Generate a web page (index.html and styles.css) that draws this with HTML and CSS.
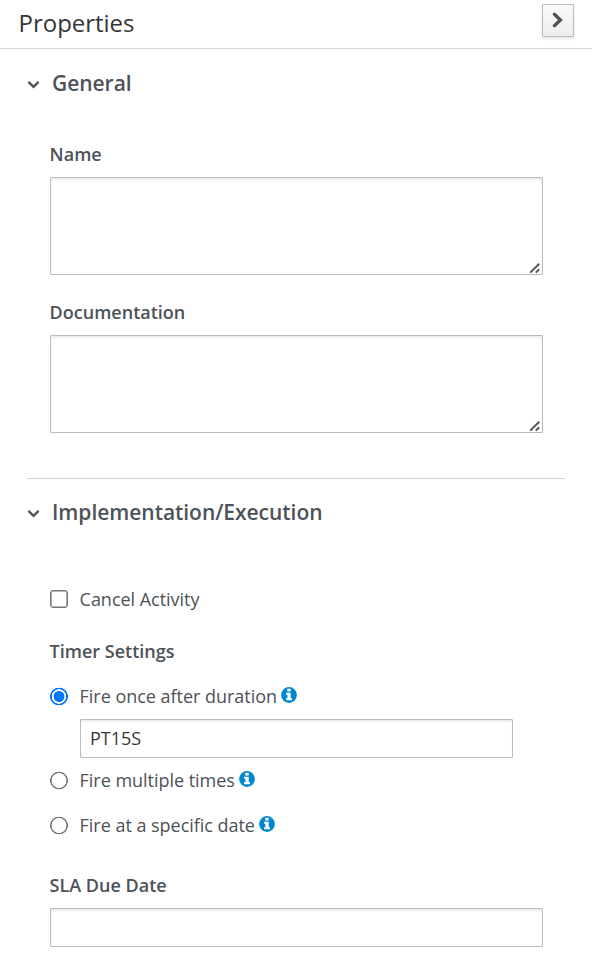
FILE: index.html
```html
<!DOCTYPE html>
<html lang="en">
<head>
<meta charset="utf-8">
<title>Properties</title>
<link rel="stylesheet" href="styles.css">
</head>
<body>
<svg class="defs" aria-hidden="true">
  <symbol id="chev" viewBox="0 0 13 9"><path d="M1.4 1.9 6.5 6.8 11.6 1.9" fill="none" stroke="#4d5258" stroke-width="2.3"/></symbol>
  <symbol id="info" viewBox="0 0 16 16"><circle cx="8" cy="8" r="7.9" fill="#0088ce"/><path d="M6.3 1.8h3.4v2.8H6.3zM5.1 5.8h4.6v5.5h1.3v2H5v-2h1.4V7.8H5.1z" fill="#fff"/></symbol>
  <symbol id="grip" viewBox="0 0 12 12"><path d="M1.2 10.6 10.2 1.8M6.8 10.6l3.4-3.4" fill="none" stroke="#555" stroke-width="2"/></symbol>
</svg>
<header class="header">
  <h1 class="title">Properties</h1>
  <button class="collapse" aria-label="Collapse"><svg width="12" height="16" viewBox="0 0 12 16"><path d="M2.4 2.3 8.4 8 2.4 13.7" fill="none" stroke="#4d5258" stroke-width="3.3" stroke-linecap="round"/></svg></button>
</header>
<main class="panel">
  <section class="section general">
    <h2 class="heading"><svg class="chev"><use href="#chev"/></svg>General</h2>
    <div class="fields">
      <label class="label" for="name">Name</label>
      <div class="area-wrap"><textarea class="area" id="name"></textarea><svg class="grip"><use href="#grip"/></svg></div>
      <label class="label doc" for="doc">Documentation</label>
      <div class="area-wrap"><textarea class="area" id="doc"></textarea><svg class="grip"><use href="#grip"/></svg></div>
    </div>
  </section>
  <section class="section execution">
    <h2 class="heading"><svg class="chev"><use href="#chev"/></svg>Implementation/Execution</h2>
    <div class="fields">
      <label class="choice cancel"><input type="checkbox">Cancel Activity</label>
      <div class="label timer">Timer Settings</div>
      <label class="choice once"><input type="radio" name="t" checked>Fire once after duration<svg class="info"><use href="#info"/></svg></label>
      <input class="text duration" type="text" value="PT15S">
      <label class="choice multiple"><input type="radio" name="t">Fire multiple times<svg class="info"><use href="#info"/></svg></label>
      <label class="choice date"><input type="radio" name="t">Fire at a specific date<svg class="info"><use href="#info"/></svg></label>
      <label class="label sla" for="sla">SLA Due Date</label>
      <input class="text" id="sla" type="text">
    </div>
  </section>
</main>
</body>
</html>
```
FILE: styles.css
```css
* { box-sizing: border-box; }
html { overflow: hidden; }
body { margin: 0; background: #fff; color: #4d5258; font: 18px/30px "Open Sans", sans-serif; }
.defs { position: absolute; width: 0; height: 0; }
.header { display: flex; justify-content: space-between; height: 49px; padding: 4px 18px 0 18.6px; border-bottom: 1px solid #d9d9d9; }
.title { margin: 0; font-size: 24px; line-height: 38px; font-weight: 400; letter-spacing: -0.05px; color: #363636; }
.collapse { display: flex; align-items: center; justify-content: center; width: 32px; height: 33px; padding: 0 0 2px; border: 1px solid #bbb; border-radius: 1px; background: linear-gradient(#fafafa, #ededed); box-shadow: 0 2px 3px rgba(3,3,3,.1); }
.panel { padding: 0 27px; }
.heading { display: flex; align-items: center; gap: 12px; height: 30px; margin: 0; font-size: 21px; font-weight: 600; letter-spacing: -0.04px; }
.chev { width: 13px; height: 9px; margin-top: 3px; }
.fields { padding: 0 22px 0 23px; }
.general { height: 429px; padding-top: 19px; }
.general .fields { padding-top: 41px; }
.execution { border-top: 1px solid #d1d1d1; padding-top: 18px; }
.execution .fields { padding-top: 57px; }
.label { display: block; height: 30px; margin: 0 0 8px -0.4px; font-weight: 600; }
.doc { margin-top: 22px; }
.area-wrap { position: relative; }
.grip { position: absolute; right: 2px; bottom: 1px; width: 12px; height: 12px; pointer-events: none; }
.area, .text { display: block; width: 100%; border: 1px solid #bbb; border-radius: 1px; background: #fff; box-shadow: inset 0 2px 2px rgba(3,3,3,.07); outline: 0; font: 18px/28px "Open Sans", sans-serif; color: #363636; }
.area { height: 98px; resize: none; }
.text { height: 39px; padding: 1px 9px 3px; }
.choice { display: flex; align-items: center; height: 30px; letter-spacing: -0.03px; }
.choice input { appearance: none; flex: none; width: 18px; height: 18px; margin: 0 11.6px 0 0; border: 1px solid #767676; box-shadow: inset 0 0 0 0.6px #767676; border-radius: 3px; background: #fff; }
.choice input[type="radio"] { height: 19px; margin-top: 1px; border: 0; box-shadow: none; border-radius: 0; background: radial-gradient(circle, #fff 7.2px, #767676 7.7px, #767676 8.6px, transparent 9.1px); }
.choice input[type="radio"]:checked { background: radial-gradient(circle, #0075ff 5.1px, #fff 5.7px, #fff 7px, #0075ff 7.5px, #0075ff 8.6px, transparent 9.1px); }
.timer { margin-top: 22px; margin-bottom: 15px; }
.info { width: 16px; height: 16px; margin: -3px 0 0 4.5px; }
.duration { width: 433px; margin: 8px 0 7px 30px; }
.date { margin-top: 15px; }
.sla { margin-top: 30px; }
```
